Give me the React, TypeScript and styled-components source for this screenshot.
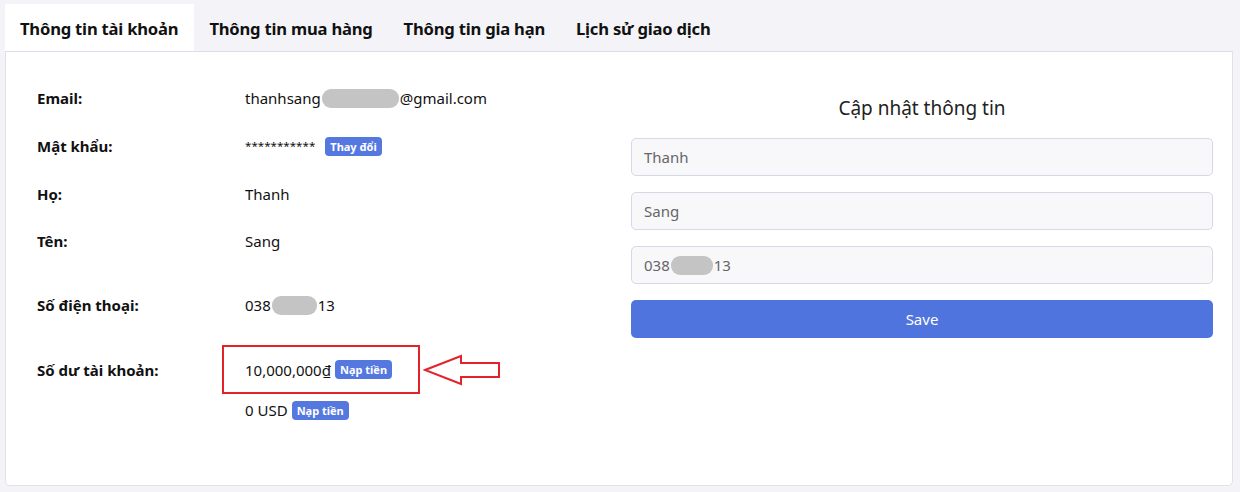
import React from "react";
import styled, { createGlobalStyle } from "styled-components";

const Global = createGlobalStyle`
  html, body { margin: 0; padding: 0; }
  body {
    background: #f4f4f8;
    font-family: "Noto Sans", "Open Sans", Arial, sans-serif;
    color: #111;
  }
  * { box-sizing: border-box; }
`;

const Page = styled.div`
  width: 1240px;
  height: 492px;
  padding: 4px 7px 0 5px;
  display: flex;
  flex-direction: column;
`;

const TabBar = styled.div`
  display: flex;
  height: 48px;
  align-items: stretch;
  border-bottom: 1px solid #dcdcec;
`;

const Tab = styled.div<{ $active?: boolean }>`
  display: flex;
  align-items: center;
  padding: 2px 16px 0 15px;
  font-size: 16.6px;
  font-weight: 700;
  color: #111;
  background: ${(p) => (p.$active ? "#ffffff" : "transparent")};
  letter-spacing: -0.2px;
`;

const Card = styled.div`
  height: 434px;
  background: #fff;
  border: 1px solid #e1e1ee;
  border-top: none;
  border-radius: 0 0 5px 5px;
  display: grid;
  grid-template-columns: 582px 582px;
  column-gap: 12px;
  padding: 0 0 0 31px;
`;

const InfoList = styled.div`
  display: flex;
  flex-direction: column;
  padding-top: 22px;
`;

const Row = styled.div<{ $h: number }>`
  display: grid;
  grid-template-columns: 208px 1fr;
  align-items: center;
  height: ${(p) => p.$h}px;
`;

const Label = styled.div`
  font-size: 15px;
  font-weight: 700;
  color: #111;
`;

const Value = styled.div`
  display: flex;
  align-items: center;
  font-size: 15px;
  color: #111;
`;

const Blur = styled.span<{ $w: number }>`
  display: inline-block;
  width: ${(p) => p.$w}px;
  height: 19px;
  margin: 0 1px;
  border-radius: 9px;
  background: #c4c4c4;
`;

const Stars = styled.span`
  font-size: 11.6px;
  letter-spacing: 0;
  margin-right: 10px;
  position: relative;
  top: -1px;
`;

const Badge = styled.span<{ $ml?: number }>`
  display: inline-flex;
  align-items: center;
  height: 19px;
  padding: 0 5px;
  margin-left: ${(p) => p.$ml ?? 0}px;
  border-radius: 4px;
  background: #5478df;
  color: #fff;
  font-size: 11px;
  font-weight: 700;
`;

const Highlight = styled.div`
  display: flex;
  align-items: center;
  margin-left: -23px;
  height: 49px;
  width: 198px;
  padding-left: 21px;
  border: 2px solid #e3232b;
`;

const Arrow = styled.svg`
  margin-left: 3px;
  flex: none;
`;

const FormCol = styled.div`
  display: flex;
  flex-direction: column;
  padding-top: 42px;
  width: 582px;
`;

const Title = styled.div`
  text-align: center;
  font-size: 19px;
  color: #222;
  height: 28px;
  line-height: 28px;
  margin-bottom: 16px;
`;

const Input = styled.input`
  height: 38px;
  width: 100%;
  border: 1px solid #d7d7e6;
  border-radius: 5px;
  background: #f8f8fa;
  padding: 0 12px;
  font-family: inherit;
  font-size: 15px;
  color: #666;
  margin-bottom: 16px;
  outline: none;
`;

const FakeInput = styled.div`
  height: 38px;
  border: 1px solid #d7d7e6;
  border-radius: 5px;
  background: #f8f8fa;
  padding: 0 12px;
  font-size: 15px;
  color: #666;
  display: flex;
  align-items: center;
  margin-bottom: 16px;
`;

const SaveButton = styled.button`
  height: 38px;
  border: none;
  border-radius: 5px;
  background: #4f74de;
  color: #fff;
  font-family: inherit;
  font-size: 15px;
`;

export default function App() {
  return (
    <>
      <Global />
      <Page>
        <TabBar>
          <Tab $active>Thông tin tài khoản</Tab>
          <Tab>Thông tin mua hàng</Tab>
          <Tab>Thông tin gia hạn</Tab>
          <Tab>Lịch sử giao dịch</Tab>
        </TabBar>
        <Card>
          <InfoList>
            <Row $h={48}>
              <Label>Email:</Label>
              <Value>
                thanhsang<Blur $w={77} />@gmail.com
              </Value>
            </Row>
            <Row $h={48}>
              <Label>Mật khẩu:</Label>
              <Value>
                <Stars>***********</Stars>
                <Badge>Thay đổi</Badge>
              </Value>
            </Row>
            <Row $h={47}>
              <Label>Họ:</Label>
              <Value>Thanh</Value>
            </Row>
            <Row $h={48}>
              <Label>Tên:</Label>
              <Value>Sang</Value>
            </Row>
            <Row $h={80}>
              <Label>Số điện thoại:</Label>
              <Value>
                038<Blur $w={45} />13
              </Value>
            </Row>
            <Row $h={48}>
              <Label>Số dư tài khoản:</Label>
              <Value>
                <Highlight>
                  10,000,000₫<Badge $ml={4}>Nạp tiền</Badge>
                </Highlight>
                <Arrow width="78" height="34" viewBox="0 0 78 34">
                  <path
                    d="M2 17 L38 3 L38 10 L76 10 L76 24 L38 24 L38 31 Z"
                    fill="none"
                    stroke="#e3232b"
                    strokeWidth="2"
                    strokeLinejoin="miter"
                  />
                </Arrow>
              </Value>
            </Row>
            <Row $h={34}>
              <Label />
              <Value>
                0 USD<Badge $ml={4}>Nạp tiền</Badge>
              </Value>
            </Row>
          </InfoList>
          <FormCol>
            <Title>Cập nhật thông tin</Title>
            <Input defaultValue="Thanh" />
            <Input defaultValue="Sang" />
            <FakeInput>
              038<Blur $w={42} />13
            </FakeInput>
            <SaveButton>Save</SaveButton>
          </FormCol>
        </Card>
      </Page>
    </>
  );
}
